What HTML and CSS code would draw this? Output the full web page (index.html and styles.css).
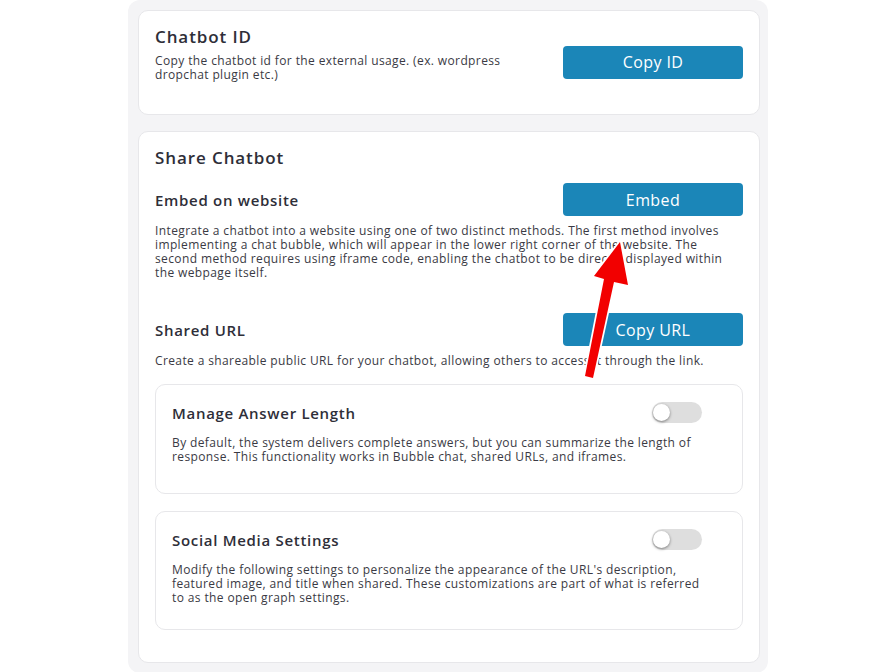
FILE: index.html
```html
<!DOCTYPE html>
<html lang="en">
<head>
    <meta charset="UTF-8">
    <meta name="viewport" content="width=device-width, initial-scale=1.0">
    <title>Chatbot Settings</title>
    <link rel="stylesheet" href="styles.css">
</head>
<body>
    <div class="panel">
        <div class="card card-id">
            <div class="card-id-text">
                <h2>Chatbot ID</h2>
                <p class="desc">Copy the chatbot id for the external usage. (ex. wordpress dropchat plugin etc.)</p>
            </div>
            <button type="button" class="btn">Copy ID</button>
        </div>

        <div class="card card-share">
            <h2>Share Chatbot</h2>

            <div class="row">
                <h3>Embed on website</h3>
                <button type="button" class="btn">Embed</button>
            </div>
            <p class="desc desc-embed">Integrate a chatbot into a website using one of two distinct methods. The first method involves implementing a chat bubble, which will appear in the lower right corner of the website. The second method requires using iframe code, enabling the chatbot to be directly displayed within the webpage itself.</p>

            <div class="row row-url">
                <h3>Shared URL</h3>
                <button type="button" class="btn">Copy URL</button>
            </div>
            <p class="desc">Create a shareable public URL for your chatbot, allowing others to access it through the link.</p>

            <div class="sub-card sub-card-length">
                <div class="sub-head">
                    <h3>Manage Answer Length</h3>
                    <span class="toggle"><span class="knob"></span></span>
                </div>
                <p class="desc">By default, the system delivers complete answers, but you can summarize the length of response. This functionality works in Bubble chat, shared URLs, and iframes.</p>
            </div>

            <div class="sub-card sub-card-social">
                <div class="sub-head">
                    <h3>Social Media Settings</h3>
                    <span class="toggle"><span class="knob"></span></span>
                </div>
                <p class="desc">Modify the following settings to personalize the appearance of the URL's description, featured image, and title when shared. These customizations are part of what is referred to as the open graph settings.</p>
            </div>
        </div>
    </div>

    <!-- annotation arrow -->
    <svg class="arrow" width="70" height="160" viewBox="575 232 70 160">
        <polygon points="620,242 628,285 614,282 593,378 585,376 604,279 594,276"
                 fill="#f20000" stroke="#ffffff" stroke-width="3.5" stroke-linejoin="round" paint-order="stroke"/>
    </svg>
</body>
</html>
```

FILE: styles.css
```css
body {
    margin: 0;
    background: #ffffff;
    font-family: "Open Sans", "Liberation Sans", sans-serif;
    color: #2e2e38;
    position: relative;
}
.panel {
    width: 622px;
    margin: 0 auto;
    padding: 10px 8px 10px 10px;
    background: #f4f4f6;
    border-radius: 12px;
}
.card {
    background: #ffffff;
    border: 1px solid #e7e7ea;
    border-radius: 10px;
}
h2 {
    margin: 0;
    font-size: 17px;
    font-weight: 600;
    line-height: 24px;
    letter-spacing: 0.9px;
}
h3 {
    margin: 0;
    font-size: 15px;
    font-weight: 600;
    line-height: 20px;
    letter-spacing: 0.7px;
}
.desc {
    margin: 0;
    font-size: 12px;
    line-height: 14px;
    letter-spacing: 0.38px;
    color: #3a3a44;
}
.btn {
    width: 180px;
    height: 33px;
    background-color: #1b86b8;
    color: #ffffff;
    border: none;
    border-radius: 4px;
    font-family: inherit;
    font-size: 16px;
    letter-spacing: 0.4px;
    cursor: pointer;
}

/* chatbot id */
.card-id {
    display: flex;
    align-items: center;
    gap: 40px;
    padding: 14px 16px 15px;
}
.card-id-text {
    flex: 1;
    padding-bottom: 17px;
}
.card-id-text .desc {
    margin-top: 5px;
}

/* share */
.card-share {
    margin-top: 16px;
    padding: 14px 16px 32px;
}
.row {
    display: flex;
    align-items: center;
    justify-content: space-between;
    margin-top: 13px;
}
.row + .desc {
    margin-top: 8px;
}
.desc-embed {
    margin-top: 9px;
}
.row-url {
    margin-top: 33px;
}
.sub-card {
    margin-top: 17px;
    border: 1px solid #e7e7ea;
    border-radius: 10px;
    padding: 17px 40px 28px 16px;
}
.sub-card-length {
    margin-top: 16px;
    padding-bottom: 29px;
}
.sub-card-social {
    padding-bottom: 24px;
}
.sub-head {
    display: flex;
    align-items: center;
    justify-content: space-between;
}
.sub-card .desc {
    margin-top: 13px;
}
.toggle {
    display: block;
    width: 50px;
    height: 21px;
    border-radius: 11px;
    background: #dedede;
    position: relative;
}
.knob {
    position: absolute;
    left: 1px;
    top: 2px;
    width: 17px;
    height: 17px;
    border-radius: 50%;
    background: #ffffff;
    box-shadow: 0 1px 3px rgba(0, 0, 0, 0.45);
}
.arrow {
    position: absolute;
    left: 575px;
    top: 232px;
}
```
